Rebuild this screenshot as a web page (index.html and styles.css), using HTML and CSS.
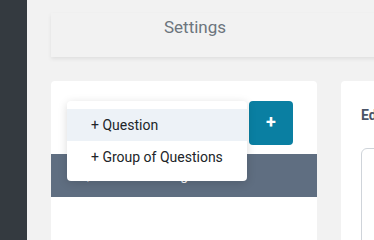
FILE: index.html
```html
<!DOCTYPE html>
<html lang="en">
<head>
  <meta charset="UTF-8" />
  <meta name="viewport" content="width=device-width, initial-scale=1.0"/>
  <title>Settings</title>
  <link rel="stylesheet" href="styles.css">
</head>
<body>
  <div class="sidebar"></div>
  <div class="main">
    <div class="page-header">
      <h1>Settings</h1>
    </div>

    <div class="panels">
      <div class="panel questions">
        <div class="toolbar">
          <button class="add-btn">+</button>
        </div>
        <div class="list-head">Questions Listing</div>

        <div class="dropdown">
          <div class="dropdown-item active">+ Question</div>
          <div class="dropdown-item">+ Group of Questions</div>
        </div>
      </div>

      <div class="panel editor">
        <div class="editor-title">Edit Question</div>
        <div class="editor-box"></div>
      </div>
    </div>
  </div>
</body>
</html>
```

FILE: styles.css
```css
body {
  margin: 0;
  display: flex;
  height: 240px;
  overflow: hidden;
  font-family: Roboto, 'Liberation Sans', sans-serif;
  background: #f2f2f2;
}
.sidebar {
  width: 27px;
  flex-shrink: 0;
  background: #343a40;
}
.main {
  flex: 1;
  padding: 13px 0 0 24px;
  overflow: hidden;
}
.page-header {
  height: 44px;
  box-sizing: border-box;
  background: #f2f2f2;
  box-shadow: 0 2px 4px rgba(0,0,0,0.08);
  padding: 4px 0 0 113px;
  width: 400px;
}
h1 {
  margin: 0;
  font-size: 17px;
  line-height: 20px;
  font-weight: 400;
  color: #6c757d;
}
.panels {
  display: flex;
  gap: 24px;
  margin-top: 24px;
}
.panel {
  background: white;
  border-radius: 4px;
  height: 200px;
  flex-shrink: 0;
}
.questions {
  width: 266px;
  position: relative;
}
.toolbar {
  display: flex;
  justify-content: flex-end;
  padding: 20px 24px 9px;
}
.add-btn {
  width: 44px;
  height: 44px;
  border: none;
  border-radius: 4px;
  background: #0a7fa2;
  color: white;
  font-size: 18px;
  font-weight: 700;
  padding: 0 0 4px;
  font-family: inherit;
}
.list-head {
  height: 43px;
  background: #5f6e81;
  color: white;
  font-size: 14px;
  line-height: 43px;
  padding-left: 29px;
}
.dropdown {
  position: absolute;
  top: 20px;
  left: 16px;
  width: 180px;
  padding: 8px 0;
  background: white;
  border-radius: 4px;
  box-shadow: 0 2px 10px rgba(0,0,0,0.15);
}
.dropdown-item {
  height: 32px;
  line-height: 32px;
  padding-left: 24px;
  font-size: 14px;
  color: #212529;
}
.dropdown-item.active {
  background: #edf2f7;
}
.editor {
  width: 200px;
  padding: 0 20px;
}
.editor-title {
  margin-top: 26px;
  font-size: 14px;
  font-weight: 700;
  color: #4a5568;
}
.editor-box {
  margin-top: 25px;
  height: 120px;
  border: 1px solid #cfd4da;
  border-radius: 6px;
}
```
